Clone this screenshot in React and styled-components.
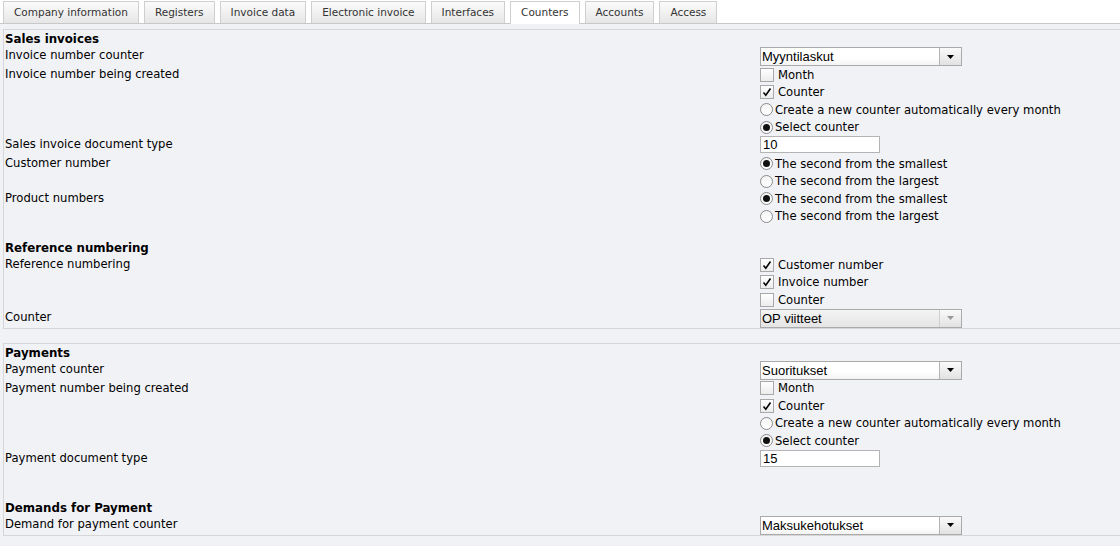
import styled, { createGlobalStyle } from "styled-components"

const GlobalStyle = createGlobalStyle`
  html, body {
    margin: 0;
    padding: 0;
    background: #f1f2f6;
    font-family: "DejaVu Sans", Verdana, sans-serif;
    font-size: 11.6px;
    color: #000;
  }
`

const tabs = ["Company information", "Registers", "Invoice data", "Electronic invoice", "Interfaces", "Counters", "Accounts", "Access"]

export default function App() {
  return (
    <Page>
      <GlobalStyle />
      <TabBar>
        {tabs.map(t => (
          <Tab key={t} $active={t === "Counters"}>{t}</Tab>
        ))}
      </TabBar>

      <Panel>
        <Title>Sales invoices</Title>
        <Row>
          <Label>Invoice number counter</Label>
          <Controls>
            <Select value="Myyntilaskut" />
          </Controls>
        </Row>
        <Row>
          <Label>Invoice number being created</Label>
          <Controls>
            <Check label="Month" />
            <Check label="Counter" checked />
            <Radio label="Create a new counter automatically every month" />
            <Radio label="Select counter" checked />
          </Controls>
        </Row>
        <Row>
          <Label>Sales invoice document type</Label>
          <Controls>
            <TextInput>10</TextInput>
          </Controls>
        </Row>
        <Row>
          <Label>Customer number</Label>
          <Controls>
            <Radio label="The second from the smallest" checked />
            <Radio label="The second from the largest" />
          </Controls>
        </Row>
        <Row>
          <Label>Product numbers</Label>
          <Controls>
            <Radio label="The second from the smallest" checked />
            <Radio label="The second from the largest" />
          </Controls>
        </Row>
        <Spacer $h={15} />
        <Title>Reference numbering</Title>
        <Row>
          <Label>Reference numbering</Label>
          <Controls>
            <Check label="Customer number" checked />
            <Check label="Invoice number" checked />
            <Check label="Counter" />
          </Controls>
        </Row>
        <Row>
          <Label>Counter</Label>
          <Controls>
            <Select value="OP viitteet" disabled />
          </Controls>
        </Row>
      </Panel>

      <Panel>
        <Title>Payments</Title>
        <Row>
          <Label>Payment counter</Label>
          <Controls>
            <Select value="Suoritukset" />
          </Controls>
        </Row>
        <Row>
          <Label>Payment number being created</Label>
          <Controls>
            <Check label="Month" />
            <Check label="Counter" checked />
            <Radio label="Create a new counter automatically every month" />
            <Radio label="Select counter" checked />
          </Controls>
        </Row>
        <Row>
          <Label>Payment document type</Label>
          <Controls>
            <TextInput>15</TextInput>
          </Controls>
        </Row>
        <Spacer $h={31} />
        <Title>Demands for Payment</Title>
        <Row>
          <Label>Demand for payment counter</Label>
          <Controls>
            <Select value="Maksukehotukset" />
          </Controls>
        </Row>
      </Panel>
    </Page>
  )
}

function Select({ value, disabled }) {
  return (
    <SelectBox $disabled={disabled}>
      <SelectValue>{value}</SelectValue>
      <SelectArrow $disabled={disabled}>
        <svg width="7" height="4" viewBox="0 0 7 4">
          <path d="M0 0h7L3.5 4z" fill={disabled ? "#999" : "#000"} />
        </svg>
      </SelectArrow>
    </SelectBox>
  )
}

function Check({ label, checked }) {
  return (
    <Option>
      <Box>
        {checked && (
          <svg width="10" height="10" viewBox="0 0 10 10">
            <path d="M1.5 5.5 L3.8 8.2 L8.5 1.5" fill="none" stroke="#000" strokeWidth="1.6" />
          </svg>
        )}
      </Box>
      <OptionText $gap={4}>{label}</OptionText>
    </Option>
  )
}

function Radio({ label, checked }) {
  return (
    <Option>
      <Circle>{checked && <Dot />}</Circle>
      <OptionText $gap={2}>{label}</OptionText>
    </Option>
  )
}

const Page = styled.div`
  padding-bottom: 10px;
`
const TabBar = styled.div`
  display: flex;
  gap: 5px;
  padding: 1px 0 0 3px;
  height: 22px;
  border-bottom: 1px solid #c8c8c8;
  background: #fff;
  margin-bottom: 5px;
`
const Tab = styled.div`
  height: 21px;
  line-height: 21px;
  padding: 0 10px;
  border: 1px solid #cfcfcf;
  border-bottom: none;
  color: #333;
  font-size: 10.5px;
  background: ${p => p.$active ? "#fff" : "linear-gradient(#fbfbfb, #e6e6e6)"};
  ${p => p.$active && "height: 22px; margin-bottom: -1px;"}
`
const Panel = styled.div`
  border-top: 1px solid #d6d6d8;
  border-left: 1px solid #d6d6d8;
  border-bottom: 1px solid #d6d6d8;
  margin-left: 3px;
  padding: 1px 0 0 1px;
  margin-bottom: 14px;
`
const Title = styled.div`
  font-weight: bold;
  font-size: 11.8px;
  height: 16px;
  line-height: 16px;
`
const Row = styled.div`
  display: grid;
  grid-template-columns: 755px 1fr;
`
const Label = styled.div`
  line-height: 16px;
`
const Controls = styled.div`
  display: flex;
  flex-direction: column;
  align-items: flex-start;
`
const Spacer = styled.div`
  height: ${p => p.$h || 17}px;
`
const SelectBox = styled.div`
  width: 200px;
  height: 17px;
  border: 1px solid #aaa;
  display: flex;
  background: ${p => p.$disabled ? "linear-gradient(#f4f4f4, #e4e4e4)" : "linear-gradient(#fff 60%, #f3f3f3)"};
`
const SelectValue = styled.div`
  flex: 1;
  font-family: "Liberation Sans", Arial, sans-serif;
  font-size: 13px;
  line-height: 17px;
  padding-left: 1px;
`
const SelectArrow = styled.div`
  width: 21px;
  border-left: 1px solid ${p => p.$disabled ? "#d0d0d0" : "#b4b4b4"};
  display: flex;
  align-items: center;
  justify-content: center;
  background: linear-gradient(#fafafa, #e2e2e2);
`
const TextInput = styled.div`
  width: 116px;
  height: 15px;
  border: 1px solid #b4b4b4;
  background: #fff;
  font-family: "Liberation Sans", Arial, sans-serif;
  font-size: 13px;
  line-height: 15px;
  padding-left: 2px;
  margin-bottom: 2px;
`
const Option = styled.div`
  display: flex;
  align-items: center;
  height: 17.5px;
`
const OptionText = styled.span`
  margin-left: ${p => p.$gap}px;
`
const Box = styled.span`
  width: 12px;
  height: 12px;
  border: 1px solid #a8a8a8;
  background: linear-gradient(#fff, #ececec);
  display: flex;
  align-items: center;
  justify-content: center;
`
const Circle = styled.span`
  width: 11px;
  height: 11px;
  border: 1px solid #8a8a8a;
  border-radius: 50%;
  background: linear-gradient(#f4f4f4, #fff);
  display: flex;
  align-items: center;
  justify-content: center;
`
const Dot = styled.span`
  width: 7px;
  height: 7px;
  border-radius: 50%;
  background: #111;
`
